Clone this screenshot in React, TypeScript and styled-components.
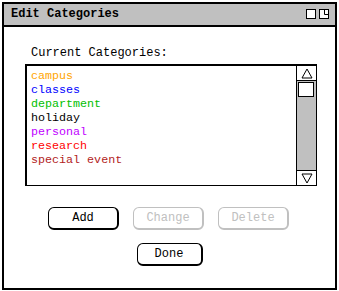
import React from 'react'
import styled, { createGlobalStyle } from 'styled-components'

const GlobalStyle = createGlobalStyle`
    html, body {
        margin: 0;
        padding: 0;
        background: #ffffff;
    }
    body {
        font-family: 'Liberation Mono', 'DejaVu Sans Mono', monospace;
    }
`

const Window = styled.div`
    margin: 2px 0 0 2px;
    width: 335px;
    height: 288px;
    box-sizing: border-box;
    border: 2px solid #000;
    display: flex;
    flex-direction: column;
    background: #fff;
`

const TitleBar = styled.div`
    height: 23px;
    box-sizing: border-box;
    background: #c0c0c0;
    border-bottom: 2px solid #000;
    display: flex;
    align-items: center;
    justify-content: space-between;
    padding: 0 6px 1px 7px;
`

const Title = styled.span`
    font-weight: bold;
    font-size: 12px;
    color: #000;
`

const TitleIcons = styled.div`
    display: flex;
    gap: 3px;
    align-items: center;
`

const Body = styled.div`
    display: flex;
    flex-direction: column;
    padding: 18px 0 0 21px;
`

const Label = styled.div`
    font-size: 12px;
    color: #000;
    padding-left: 6px;
    height: 16px;
    line-height: 16px;
`

const ListBox = styled.div`
    margin-top: 3px;
    width: 292px;
    height: 122px;
    box-sizing: border-box;
    border: 1px solid #000;
    border-width: 2px 1px 1px 2px;
    display: flex;
`

const Items = styled.div`
    flex: 1;
    padding: 3px 0 0 4px;
    display: flex;
    flex-direction: column;
`

const Item = styled.div<{ $color: string }>`
    color: ${(p) => p.$color};
    font-size: 11.7px;
    height: 14px;
    line-height: 14px;
    white-space: pre;
`

const ScrollBar = styled.div`
    width: 19px;
    border-left: 1px solid #000;
    display: flex;
    flex-direction: column;
`

const ArrowCell = styled.div<{ $bottom?: boolean }>`
    height: 14px;
    display: flex;
    align-items: center;
    justify-content: center;
    background: #fff;
    ${(p) => (p.$bottom ? 'border-top: 1px solid #000;' : 'border-bottom: 1px solid #000;')}
`

const Track = styled.div`
    flex: 1;
    background: #c0c0c0;
    display: flex;
    flex-direction: column;
    padding-top: 1px;
`

const Thumb = styled.div`
    height: 15px;
    box-sizing: border-box;
    margin: 0 2px 0 1px;
    background: #fff;
    border: 1px solid #000;
`

const ButtonRow = styled.div<{ $top: number }>`
    display: flex;
    gap: 14px;
    margin-top: ${(p) => p.$top}px;
    padding-left: ${(p) => (p.$top > 15 ? 23 : 0)}px;
    justify-content: ${(p) => (p.$top > 15 ? 'flex-start' : 'center')};
`

const Button = styled.button<{ $disabled?: boolean; $width?: number }>`
    width: ${(p) => p.$width ?? 71}px;
    height: 23px;
    padding: 0;
    box-sizing: border-box;
    border-radius: 6px;
    border: 1px solid ${(p) => (p.$disabled ? '#c0c0c0' : '#000')};
    border-right-width: 2px;
    border-bottom-width: 2px;
    background: #fff;
    color: ${(p) => (p.$disabled ? '#c0c0c0' : '#000')};
    font-family: 'Liberation Mono', monospace;
    font-size: 12px;
    cursor: ${(p) => (p.$disabled ? 'default' : 'pointer')};
`

const TriangleIcon = ({ down }: { down?: boolean }) => (
    <svg width="12" height="11" viewBox="0 0 12 11">
        <polygon
            points={down ? '1,1 11,1 6,10' : '6,1 11,10 1,10'}
            fill="none"
            stroke="#000"
            strokeWidth="1"
        />
    </svg>
)

const BoxIcon = ({ split }: { split?: boolean }) => (
    <svg width="10" height="10" viewBox="0 0 10 10">
        <rect x="0.5" y="0.5" width="9" height="9" fill="#fff" stroke="#000" />
        {split && <path d="M5.5 0.5 V5.5 H9.5" fill="none" stroke="#000" />}
    </svg>
)

const categories = [
    { name: 'campus', color: '#ffa500' },
    { name: 'classes', color: '#0000ff' },
    { name: 'department', color: '#00c000' },
    { name: 'holiday', color: '#000000' },
    { name: 'personal', color: '#c000ff' },
    { name: 'research', color: '#ff0000' },
    { name: 'special event', color: '#b22222' },
]

export default function App() {
    return (
        <>
            <GlobalStyle />
            <Window>
                <TitleBar>
                    <Title>Edit Categories</Title>
                    <TitleIcons>
                        <BoxIcon />
                        <BoxIcon split />
                    </TitleIcons>
                </TitleBar>
                <Body>
                    <Label>Current Categories:</Label>
                    <ListBox>
                        <Items>
                            {categories.map((c) => (
                                <Item key={c.name} $color={c.color}>
                                    {c.name}
                                </Item>
                            ))}
                        </Items>
                        <ScrollBar>
                            <ArrowCell>
                                <TriangleIcon />
                            </ArrowCell>
                            <Track>
                                <Thumb />
                            </Track>
                            <ArrowCell $bottom>
                                <TriangleIcon down />
                            </ArrowCell>
                        </ScrollBar>
                    </ListBox>
                    <ButtonRow $top={21}>
                        <Button>Add</Button>
                        <Button $disabled>Change</Button>
                        <Button $disabled>Delete</Button>
                    </ButtonRow>
                </Body>
                <ButtonRow $top={13}>
                    <Button $width={66}>Done</Button>
                </ButtonRow>
            </Window>
        </>
    )
}
